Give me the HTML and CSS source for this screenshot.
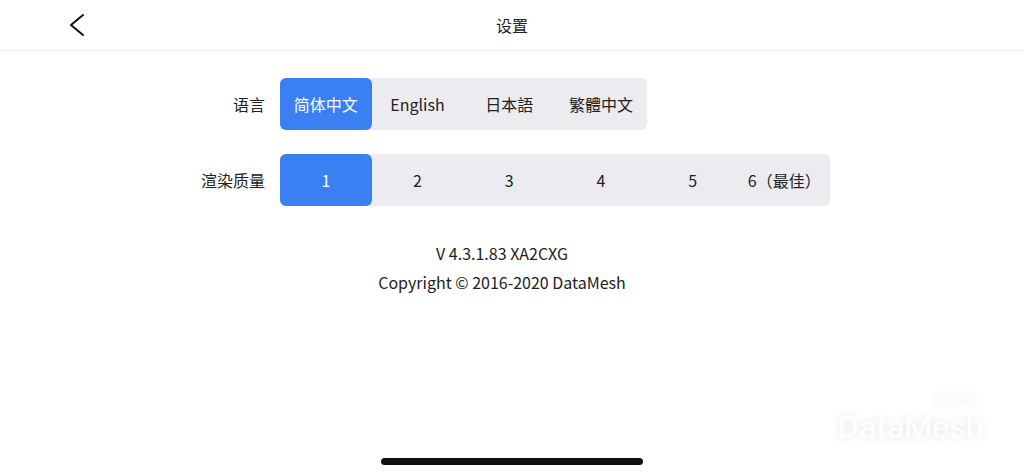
FILE: index.html
```html
<!DOCTYPE html>
<html lang="zh">
<head>
  <meta charset="UTF-8">
  <meta name="viewport" content="width=device-width, initial-scale=1.0">
  <title>设置</title>
  <link rel="stylesheet" href="styles.css">
</head>
<body>

  <div class="header">
    <button class="back" aria-label="返回">
      <svg width="18" height="24" viewBox="0 0 18 24">
        <path d="M15 2 L3 12 L15 22" fill="none" stroke="#111" stroke-width="2" stroke-linecap="round" stroke-linejoin="round"/>
      </svg>
    </button>
    <div class="title">设置</div>
  </div>

  <div class="settings">
    <div class="label">语言</div>
    <div class="segments">
      <div class="seg active">简体中文</div>
      <div class="seg">English</div>
      <div class="seg">日本語</div>
      <div class="seg">繁體中文</div>
    </div>

    <div class="label">渲染质量</div>
    <div class="segments">
      <div class="seg active">1</div>
      <div class="seg">2</div>
      <div class="seg">3</div>
      <div class="seg">4</div>
      <div class="seg">5</div>
      <div class="seg">6（最佳）</div>
    </div>
  </div>

  <div class="about">
    <p>V 4.3.1.83 XA2CXG</p>
    <p>Copyright © 2016-2020 DataMesh</p>
  </div>

  <div class="watermark">
    <span class="wm-small">数据孪生</span>
    <span class="wm-big">DataMesh</span>
  </div>

  <div class="home-bar"></div>

</body>
</html>
```

FILE: styles.css
```css
body {
  margin: 0;
  height: 475px;
  overflow: hidden;
  position: relative;
  background: #fff;
  color: #222;
  font-family: "Noto Sans CJK SC", "Noto Sans", sans-serif;
}

.header {
  height: 50px;
  border-bottom: 1px solid #f0f0f0;
  display: flex;
  align-items: center;
  justify-content: center;
  position: relative;
}

.back {
  position: absolute;
  left: 68px;
  top: 13px;
  padding: 0;
  border: none;
  background: none;
}

.title {
  font-size: 16px;
}

.settings {
  display: grid;
  grid-template-columns: 265px auto;
  column-gap: 15px;
  row-gap: 24px;
  align-items: center;
  justify-content: start;
  margin-top: 27px;
}

.label {
  text-align: right;
  font-size: 16px;
}

.segments {
  display: flex;
  background: #ebebf0;
  border-radius: 6px;
  justify-self: start;
}

.seg {
  width: 91.7px;
  height: 52px;
  display: flex;
  align-items: center;
  justify-content: center;
  font-size: 16px;
  border-radius: 6px;
}

.seg.active {
  background: #3b80f2;
  color: #fff;
}

.about {
  text-align: center;
  padding-right: 20px;
  margin-top: 33px;
  font-size: 16px;
}

.about p {
  margin: 0;
  line-height: 29px;
}

.watermark {
  position: absolute;
  left: 838px;
  top: 392px;
  display: flex;
  flex-direction: column;
  align-items: flex-end;
  color: #fff;
  text-shadow: 0 0 10px rgba(0, 0, 0, 0.12);
  font-family: Roboto, sans-serif;
}

.wm-small {
  font-size: 11px;
  margin-right: 4px;
}

.wm-big {
  font-size: 32px;
  line-height: 40px;
}

.home-bar {
  position: absolute;
  left: 381px;
  top: 458px;
  width: 262px;
  height: 7px;
  border-radius: 4px;
  background: #111;
}
```
